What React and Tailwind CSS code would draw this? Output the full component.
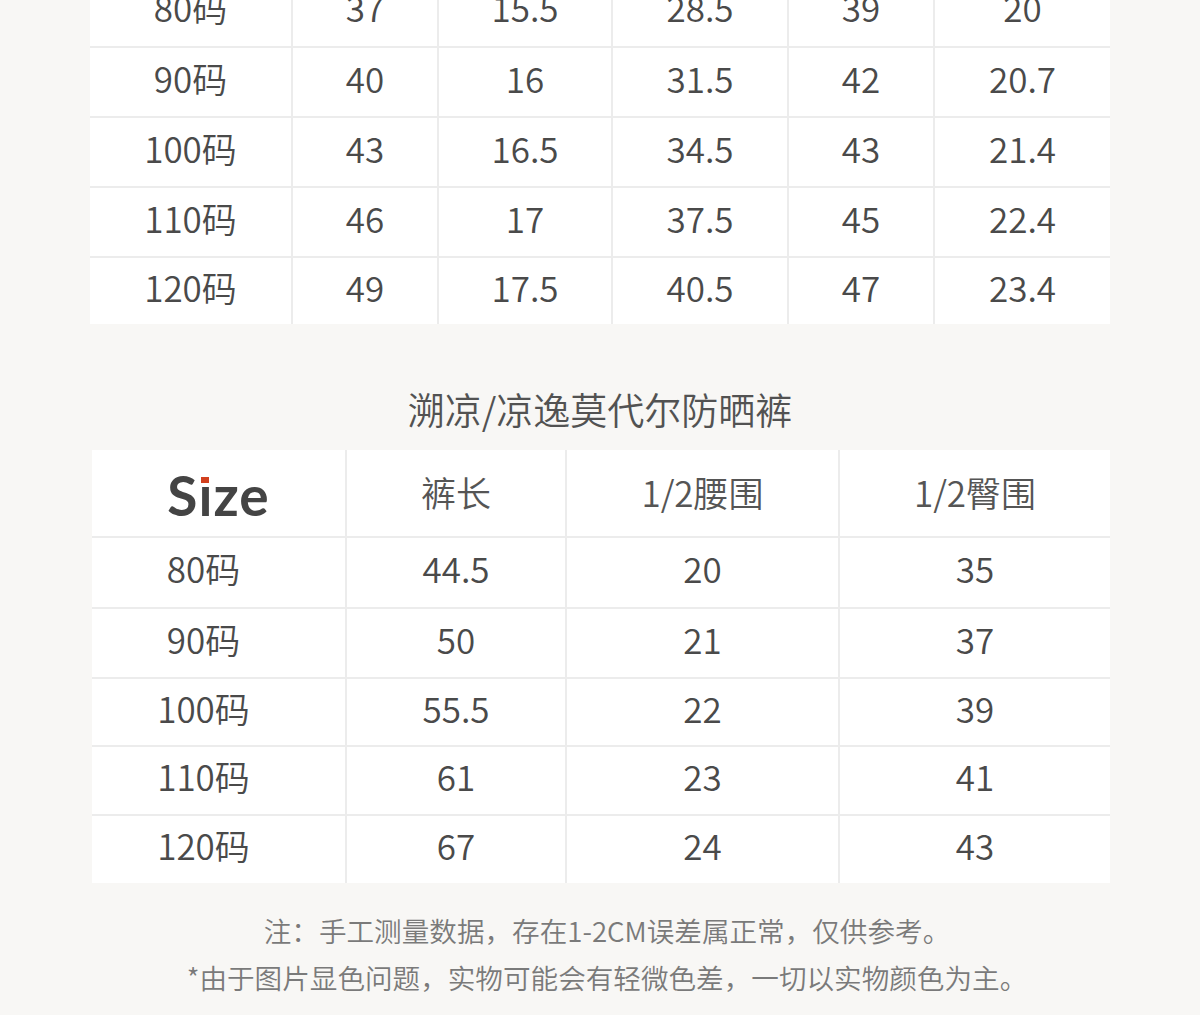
import React from 'react';

const font = { fontFamily: '"Noto Sans CJK SC", "Noto Sans", sans-serif' };

const topCols = ['w-[201px]', 'w-[146px]', 'w-[174px]', 'w-[176px]', 'w-[146px]', 'w-[177px]'];
const topRows = [
  { h: 'h-[70px]', cells: ['80码', '37', '15.5', '28.5', '39', '20'] },
  { h: 'h-[70px]', cells: ['90码', '40', '16', '31.5', '42', '20.7'] },
  { h: 'h-[70px]', cells: ['100码', '43', '16.5', '34.5', '43', '21.4'] },
  { h: 'h-[70px]', cells: ['110码', '46', '17', '37.5', '45', '22.4'] },
  { h: 'h-[68px]', cells: ['120码', '49', '17.5', '40.5', '47', '23.4'] },
];

const pantCols = ['w-[253px] pr-[30px]', 'w-[220px]', 'w-[273px]', 'w-[272px]'];
const pantRows = [
  { h: 'h-[71px]', cells: ['80码', '44.5', '20', '35'] },
  { h: 'h-[70px]', cells: ['90码', '50', '21', '37'] },
  { h: 'h-[68px]', cells: ['100码', '55.5', '22', '39'] },
  { h: 'h-[69px]', cells: ['110码', '61', '23', '41'] },
  { h: 'h-[69px]', cells: ['120码', '67', '24', '43'] },
];

const Row = ({ cols, row, first }) => (
  <div className={`flex ${row.h} ${first ? '' : 'border-t-2 border-[#ececec]'}`}>
    {row.cells.map((c, i) => (
      <div
        key={i}
        className={`${cols[i]} flex items-center justify-center pb-[10px] ${i > 0 ? 'border-l-2 border-[#ececec]' : ''}`}
      >
        {c}
      </div>
    ))}
  </div>
);

const SizeLabel = () => (
  <span
    className="inline-flex items-baseline text-[55px] font-bold text-[#444] leading-none tracking-[1px]"
    style={{ fontFamily: 'Lato, "Noto Sans", sans-serif' }}
  >
    S
    <span className="relative">
      ı
      <span className="absolute left-[3px] top-[9px] w-[8px] h-[6px] bg-[#d2401e]"></span>
    </span>
    ze
  </span>
);

export default function App() {
  return (
    <div className="w-[1200px] h-[1015px] overflow-hidden bg-[#f8f7f5] text-[#4a4a4a] font-[350]" style={font}>
      {/* top table, scrolled partly out of view */}
      <div className="mx-[90px] w-[1020px] -mt-[24px] bg-white text-[35px] leading-none">
        {topRows.map((r, i) => (
          <Row key={i} cols={topCols} row={r} first={i === 0} />
        ))}
      </div>

      <h2 className="mt-[56px] h-[60px] flex items-center justify-center text-[37px] text-[#525252] font-[350]">
        溯凉/凉逸莫代尔防晒裤
      </h2>

      <div className="mt-[10px] ml-[92px] w-[1018px] bg-white text-[35px] leading-none">
        <div className="flex h-[86px]">
          <div className="w-[253px] flex items-center justify-center pt-[4px]">
            <SizeLabel />
          </div>
          {['裤长', '1/2腰围', '1/2臀围'].map((t, i) => (
            <div
              key={t}
              className={`${pantCols[i + 1]} flex items-center justify-center pb-[4px] border-l-2 border-[#ececec] text-[35px] text-[#555]`}
            >
              {t}
            </div>
          ))}
        </div>
        {pantRows.map((r, i) => (
          <Row key={i} cols={pantCols} row={r} first={false} />
        ))}
      </div>

      <div className="mt-[24px] pl-[14px] flex flex-col items-center text-[27.6px] text-[#7a7a7a] leading-[47px]">
        <p>注：手工测量数据，存在1-2CM误差属正常，仅供参考。</p>
        <p>*由于图片显色问题，实物可能会有轻微色差，一切以实物颜色为主。</p>
      </div>
    </div>
  );
}
